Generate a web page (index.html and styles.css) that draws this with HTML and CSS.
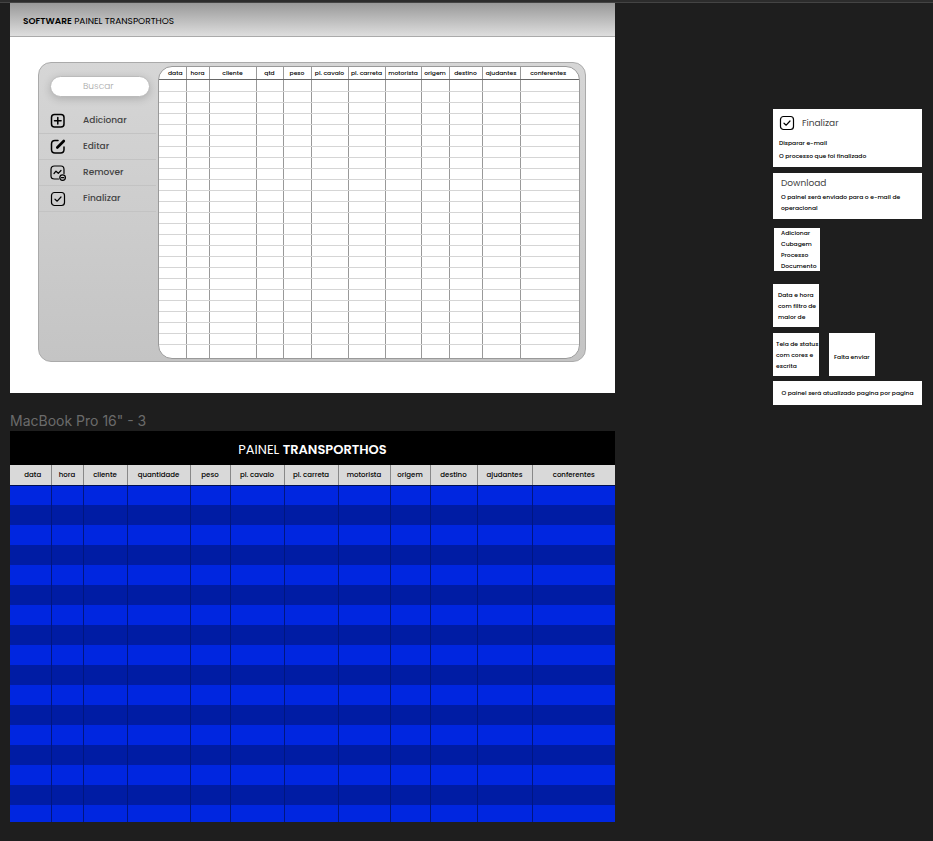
FILE: index.html
```html
<!DOCTYPE html>
<html lang="pt-BR">
<head>
<meta charset="utf-8">
<title>Painel Transporthos</title>
<link rel="stylesheet" href="styles.css">
</head>
<body>
<div class="canvas">
  <main class="boards">
    <section class="software">
      <header class="software-bar"><h1><b>SOFTWARE</b> PAINEL TRANSPORTHOS</h1></header>
      <div class="panel">
        <aside class="sidebar">
          <input class="search" type="search" placeholder="Buscar" aria-label="Buscar">
          <nav class="menu">
            <button type="button">
              <svg viewBox="0 0 16 16"><rect x="1.5" y="1.5" width="12.5" height="12.5" rx="3"/><path d="M7.8 4.5v6.6M4.5 7.8h6.6"/></svg>
              Adicionar
            </button>
            <button type="button">
              <svg viewBox="0 0 16 16"><path d="M8 1.5H5Q1.5 1.5 1.5 5v5.5Q1.5 14 5 14h5.5Q14 14 14 10.5V8"/><path class="pen" d="M7.3 8.5 13.8 2"/></svg>
              Editar
            </button>
            <button type="button">
              <svg class="thin" viewBox="0 0 16 16"><path d="M8.5 14H4.5Q1 14 1 11V4.5Q1 1 4.5 1h6.5Q14 1 14 4.5V8.5"/><path d="M4 8.5 6 6.2 8.3 8.3 11 5.5"/><circle cx="12.6" cy="12.6" r="2.8"/><path d="M11.4 12.6h2.4"/></svg>
              Remover
            </button>
            <button type="button">
              <svg class="thin" viewBox="0 0 16 16"><rect x="1.5" y="1.5" width="13" height="13" rx="3"/><path d="M5 8.2 7.2 10.2 11 6"/></svg>
              Finalizar
            </button>
          </nav>
        </aside>
        <div class="sheet">
          <table class="grid" data-rows="25">
            <colgroup><col><col><col><col><col><col><col><col><col><col><col><col></colgroup>
            <thead><tr><th>data</th><th>hora</th><th>cliente</th><th>qtd</th><th>peso</th><th>pl. cavalo</th><th>pl. carreta</th><th>motorista</th><th>origem</th><th>destino</th><th>ajudantes</th><th>conferentes</th></tr></thead>
            <tbody></tbody>
          </table>
        </div>
      </div>
    </section>

    <h2 class="frame-name">MacBook Pro 16" - 3</h2>
    <section class="display">
      <header class="display-bar"><h1>PAINEL <b>TRANSPORTHOS</b></h1></header>
      <table class="status" data-rows="17">
        <colgroup><col><col><col><col><col><col><col><col><col><col><col><col></colgroup>
        <thead><tr><th>data</th><th>hora</th><th>cliente</th><th>quantidade</th><th>peso</th><th>pl. cavalo</th><th>pl. carreta</th><th>motorista</th><th>origem</th><th>destino</th><th>ajudantes</th><th>conferentes</th></tr></thead>
        <tbody></tbody>
      </table>
    </section>
  </main>

  <aside class="notes">
    <article class="note finish">
      <h3><svg class="thin" viewBox="0 0 16 16"><rect x="1.5" y="1.5" width="13" height="13" rx="3"/><path d="M5 8.2 7.2 10.2 11 6"/></svg>Finalizar</h3>
      <p>Disparar e-mail</p>
      <p>O processo que foi finalizado</p>
    </article>
    <article class="note download">
      <h3>Download</h3>
      <p>O painel será enviado para o e-mail de operacional</p>
    </article>
    <article class="note small fields">
      <p>Adicionar<br>Cubagem<br>Processo<br>Documento</p>
    </article>
    <article class="note small filter"><p>Data e hora<br>com filtro de<br>maior de</p></article>
    <div class="pair">
      <article class="note small screen"><p>Tela de status<br>com cores e<br>escrita</p></article>
      <article class="note small missing"><p>Falta enviar</p></article>
    </div>
    <article class="note update"><p>O painel será atualizado pagina por pagina</p></article>
  </aside>
</div>
<script src="rows.js"></script>
</body>
</html>
```
FILE: styles.css
```css
* { box-sizing: border-box; }
body {
  margin: 0;
  min-height: 100vh;
  background: #1e1e1e;
  border-top: 2px solid #2c2c2c;
  font-family: Poppins, Inter, sans-serif;
  font-feature-settings: "cv11";
  color: #000;
}
h1, h2, h3, p { margin: 0; font-weight: 400; }
b { font-weight: 600; }
table { width: 100%; border-collapse: collapse; table-layout: fixed; }
th, td { padding: 0; }
svg {
  width: 16px;
  height: 16px;
  flex: none;
  fill: none;
  stroke: #000;
  stroke-width: 1.5;
  stroke-linecap: round;
  stroke-linejoin: round;
}
svg.thin { stroke-width: 1.2; }
.pen { stroke-width: 2.6; }

.canvas {
  display: grid;
  grid-template-columns: minmax(0, 1fr) 149px;
  column-gap: 158px;
  padding: 0 11px 18px 10px;
  border-top: 1px solid #444;
}

.software { background: #fff; padding-bottom: 31px; }
.software-bar {
  display: flex;
  align-items: center;
  height: 34px;
  padding: 3px 0 0 13px;
  background: linear-gradient(#999, #dedede);
  border-bottom: 1px solid #aaa;
}
.software-bar h1 { font-size: 9px; white-space: nowrap; }
.panel {
  display: flex;
  margin: 25px 29px 0 28px;
  padding: 3px 5px 2px 0;
  border: 1px solid #aaa;
  border-radius: 13px;
  background: linear-gradient(#d6d6d6, #c4c4c4);
}
.sidebar { width: 119px; flex: none; padding-top: 10px; }
.search {
  display: block;
  width: 100px;
  height: 21px;
  margin: 0 0 0 11px;
  padding: 0 0 0 32px;
  border: 1px solid #bbb;
  border-radius: 11px;
  background: #fff;
  box-shadow: 0 2px 9px rgba(0, 0, 0, .18);
  font: 300 9px Poppins, Inter, sans-serif;
  font-feature-settings: inherit;
}
.search::placeholder { color: #aaa; }
.menu { padding-top: 11px; }
.menu button {
  display: flex;
  align-items: center;
  gap: 17px;
  width: 117px;
  height: 26px;
  padding: 0 0 0 11px;
  border: 0;
  border-bottom: 1px solid #c3c3c3;
  background: none;
  font: 500 9px Poppins, Inter, sans-serif;
  font-feature-settings: inherit;
  color: #444;
}
.sheet {
  flex: 1;
  min-width: 0;
  border: 1px solid #999;
  border-radius: 14px;
  background: #fff;
  overflow: hidden;
}
.grid th {
  height: 12px;
  border-bottom: 1px solid #666;
  font-size: 6px;
  line-height: 8px;
  font-weight: 500;
}
.grid td { height: 11px; border-bottom: 1px solid #d5d5d5; }
.grid tr:first-child td { height: 12px; }
.grid tr:last-child td { height: 14px; border-bottom: 0; }
.grid th + th, .grid td + td { border-left: 1px solid #999; }
.grid th:first-child { padding-left: 6px; }
.grid col:nth-child(1) { width: 27px; }
.grid col:nth-child(2) { width: 23px; }
.grid col:nth-child(3) { width: 47px; }
.grid col:nth-child(4) { width: 27px; }
.grid col:nth-child(5) { width: 28px; }
.grid col:nth-child(6) { width: 37px; }
.grid col:nth-child(7) { width: 37px; }
.grid col:nth-child(8) { width: 36px; }
.grid col:nth-child(9) { width: 28px; }
.grid col:nth-child(10) { width: 33px; }
.grid col:nth-child(11) { width: 38px; }
.grid col:nth-child(12) { width: 60px; }
.grid th:last-child { padding-right: 4px; }

.frame-name {
  padding: 19px 0 2px;
  font: 400 14px/17px Inter, sans-serif;
  font-feature-settings: normal;
  color: #6b6b6b;
}
.display-bar {
  display: flex;
  align-items: center;
  justify-content: center;
  height: 34px;
  padding-top: 4px;
  background: #000;
  color: #fff;
}
.display-bar h1 { font-size: 13px; }
.status th {
  height: 20px;
  padding-top: 1px;
  background: #d9d9d9;
  border-bottom: 1px solid #001050;
  font-size: 7px;
  line-height: 10px;
  font-weight: 500;
}
.status th + th { border-left: 1px solid #888; }
.status th:first-child { padding-left: 5px; }
.status td { height: 20px; background: #0026e0; }
.status tr:nth-child(even) td { background: #001ca4; }
.status tr:last-child td { height: 17px; }
.status td + td { border-left: 1px solid #001680; }
.status col:nth-child(1) { width: 41px; }
.status col:nth-child(2) { width: 32px; }
.status col:nth-child(3) { width: 44px; }
.status col:nth-child(4) { width: 63px; }
.status col:nth-child(5) { width: 40px; }
.status col:nth-child(6) { width: 54px; }
.status col:nth-child(7) { width: 54px; }
.status col:nth-child(8) { width: 52px; }
.status col:nth-child(9) { width: 40px; }
.status col:nth-child(10) { width: 47px; }
.status col:nth-child(11) { width: 55px; }
.status col:nth-child(12) { width: 83px; }

.notes { padding-top: 106px; }
.note { background: #fff; font-size: 6px; line-height: 11px; }
.note p { font-weight: 500; }
.note h3 { display: flex; align-items: center; gap: 7px; font-size: 9px; color: #444; }
.finish { padding: 6px 6px 4px; height: 58px; }
.finish p { line-height: 13px; }
.finish h3 { margin-bottom: 6px; }
.download { margin-top: 6px; padding: 5px 8px; height: 46px; }
.download h3 { margin-bottom: 3px; }
.small { width: 46px; height: 43px; padding: 6px 0 0 5px; white-space: nowrap; }
.fields { margin: 9px 0 0 1px; padding: 0 0 0 7px; }
.filter { margin-top: 13px; }
.pair { display: flex; gap: 10px; margin-top: 6px; }
.screen { padding-left: 3px; }
.missing { padding-top: 19px; }
.update { margin-top: 5px; height: 24px; padding-top: 7px; text-align: center; }
```
FILE: rows.js
```js
document.querySelectorAll("table[data-rows]").forEach(function (table) {
  var columns = table.querySelectorAll("col").length;
  for (var r = 0; r < Number(table.dataset.rows); r++) {
    var row = table.tBodies[0].insertRow();
    for (var c = 0; c < columns; c++) row.insertCell();
  }
});
```
